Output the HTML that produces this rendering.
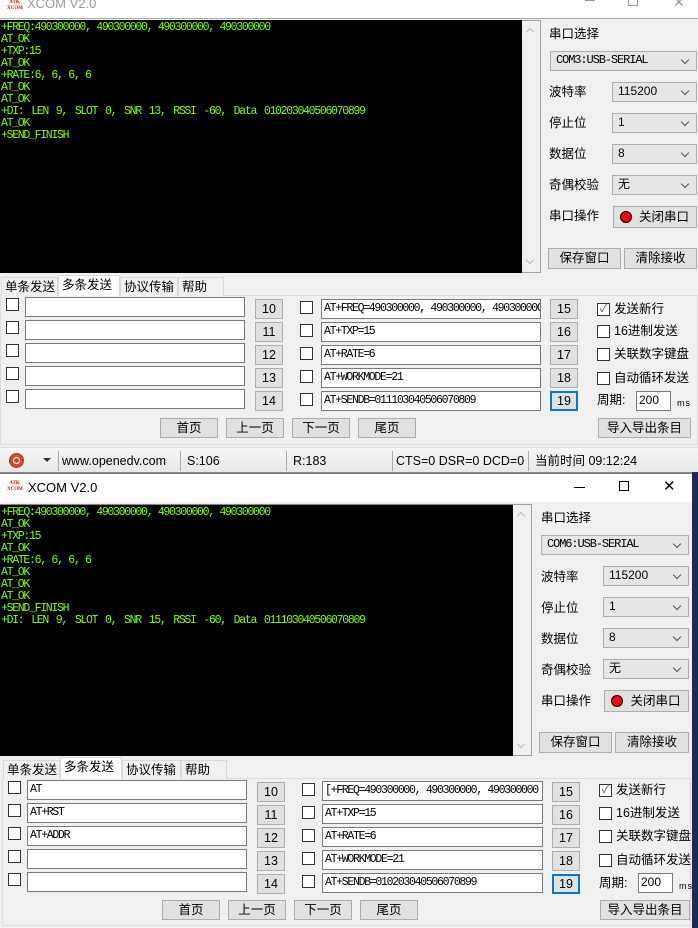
<!DOCTYPE html><html><head><meta charset="utf-8"><style>
*{box-sizing:border-box;margin:0;padding:0}
body{width:698px;height:928px;background:#f0f0f0;position:relative;overflow:hidden;font-family:"Liberation Sans","Noto Sans CJK SC",sans-serif;font-size:12px;color:#000}
.a{position:absolute}
.term{background:#000;color:#80ff00;font-family:"Liberation Mono","Noto Sans CJK SC",monospace;font-size:11.5px;letter-spacing:-1.3px;line-height:12px;padding:2px 0 0 1px;white-space:pre}
.term span{word-spacing:2.2px}
.sb{background:#f0f0f0;border:1px solid #a0a0a0;border-left:none}
.lbl{position:absolute;font-size:12.5px;line-height:14px}
.cb{position:absolute;background:#e6e6e6;border:1px solid #adadad;font-size:12px;padding-left:5px;line-height:17px}
.cb:after{content:"";position:absolute;right:8px;top:5px;width:5px;height:5px;border-right:1px solid #555;border-bottom:1px solid #555;transform:rotate(45deg)}
.cbm{font-family:"Liberation Mono",monospace;font-size:12px;letter-spacing:-1.1px}
.btn{position:absolute;background:#e1e1e1;border:1px solid #adadad;text-align:center;font-size:12.5px;line-height:18px}
.chk{position:absolute;width:13px;height:13px;border:1px solid #333;background:#fff}
.in{position:absolute;background:#fff;border:1px solid #7a7a7a;font-family:"Liberation Mono",monospace;font-size:11.5px;letter-spacing:-1.3px;line-height:17px;padding-left:2px;white-space:nowrap;overflow:hidden}
.tab{position:absolute;border:1px solid #d9d9d9;border-bottom:none;background:#f0f0f0;font-size:12.5px;line-height:18px;padding-left:3px}
.tab.s{background:#fff}
.panel{position:absolute;border:1px solid #dcdcdc;background:#f0f0f0}
.title{position:absolute;background:#fff;font-size:13px}
.logo{position:absolute;width:15px;height:13px;color:#e00;font-size:5px;font-weight:bold;line-height:6px;text-align:center;font-family:"Liberation Serif",serif}
.led{position:absolute;width:12px;height:12px;border-radius:50%;background:#f00;border:1px solid #000}
.st{position:absolute;font-size:12.5px;line-height:14px}
.sep{position:absolute;width:1px;background:#aaa}
</style></head><body>

<!-- TOP WINDOW -->
<div class="title" style="left:0;top:0;width:698px;height:19px;border-bottom:1px solid #aaa"></div>
<div class="logo" style="left:7px;top:0">ATK<br>XCOM</div>
<div class="a" style="left:27px;top:-4px;font-size:13px;color:#999">XCOM V2.0</div>
<div class="a" style="left:585px;top:0;width:10px;height:1px;background:#999"></div>
<div class="a" style="left:628px;top:-4px;width:10px;height:10px;border:1px solid #999"></div>
<div class="a" style="left:673px;top:-6px;font-size:14px;color:#999">✕</div>

<div class="a term" style="left:0;top:20px;width:522px;height:253px">+FREQ:490300000, 490300000, 490300000, 490300000
AT_OK
+TXP:15
AT_OK
+RATE:6, 6, 6, 6
AT_OK
AT_OK
<span>+DI: LEN 9, SLOT 0, SNR 13, RSSI -60, Data 010203040506070899</span>
AT_OK
+SEND_FINISH</div>
<div class="a sb" style="left:522px;top:20px;width:19px;height:253px"><div class="a" style="left:5px;top:8px;width:6px;height:6px;border-left:1px solid #bbb;border-top:1px solid #bbb;transform:rotate(45deg)"></div><div class="a" style="left:5px;top:236px;width:6px;height:6px;border-right:1px solid #bbb;border-bottom:1px solid #bbb;transform:rotate(45deg)"></div></div>

<div class="lbl" style="left:549px;top:27px">串口选择</div>
<div class="cb cbm" style="left:550px;top:51px;width:147px;height:20px">COM3:USB-SERIAL</div>
<div class="lbl" style="left:549px;top:85px">波特率</div><div class="cb" style="left:612px;top:82px;width:85px;height:20px">115200</div>
<div class="lbl" style="left:549px;top:116px">停止位</div><div class="cb" style="left:612px;top:113px;width:85px;height:20px">1</div>
<div class="lbl" style="left:549px;top:147px">数据位</div><div class="cb" style="left:612px;top:144px;width:85px;height:20px">8</div>
<div class="lbl" style="left:549px;top:178px">奇偶校验</div><div class="cb" style="left:612px;top:175px;width:85px;height:20px">无</div>
<div class="lbl" style="left:549px;top:209px">串口操作</div>
<div class="btn" style="left:613px;top:206px;width:84px;height:22px;padding-left:18px;line-height:20px">关闭串口</div><div class="led" style="left:620px;top:211px"></div>
<div class="btn" style="left:548px;top:248px;width:73px;height:21px">保存窗口</div>
<div class="btn" style="left:624px;top:248px;width:73px;height:21px">清除接收</div>

<div class="panel" style="left:0;top:295px;width:698px;height:150px"></div>
<div class="tab" style="left:1px;top:277px;width:57px;height:19px">单条发送</div>
<div class="tab s" style="left:58px;top:275px;width:62px;height:21px">多条发送</div>
<div class="tab" style="left:120px;top:277px;width:58px;height:19px">协议传输</div>
<div class="tab" style="left:178px;top:277px;width:46px;height:19px">帮助</div>

<div class="chk" style="left:6px;top:298px"></div><div class="in" style="left:25px;top:297px;width:220px;height:20px"></div><div class="btn" style="left:255px;top:299px;width:28px;height:20px">10</div>
<div class="chk" style="left:6px;top:321px"></div><div class="in" style="left:25px;top:320px;width:220px;height:20px"></div><div class="btn" style="left:255px;top:322px;width:28px;height:20px">11</div>
<div class="chk" style="left:6px;top:344px"></div><div class="in" style="left:25px;top:343px;width:220px;height:20px"></div><div class="btn" style="left:255px;top:345px;width:28px;height:20px">12</div>
<div class="chk" style="left:6px;top:367px"></div><div class="in" style="left:25px;top:366px;width:220px;height:20px"></div><div class="btn" style="left:255px;top:368px;width:28px;height:20px">13</div>
<div class="chk" style="left:6px;top:390px"></div><div class="in" style="left:25px;top:389px;width:220px;height:20px"></div><div class="btn" style="left:255px;top:391px;width:28px;height:20px">14</div>

<div class="chk" style="left:300px;top:301px"></div><div class="in" style="left:321px;top:299px;width:220px;height:20px">AT+FREQ=490300000, 490300000, 49030000C</div><div class="btn" style="left:550px;top:299px;width:28px;height:20px">15</div>
<div class="chk" style="left:300px;top:324px"></div><div class="in" style="left:321px;top:322px;width:220px;height:20px">AT+TXP=15</div><div class="btn" style="left:550px;top:322px;width:28px;height:20px">16</div>
<div class="chk" style="left:300px;top:347px"></div><div class="in" style="left:321px;top:345px;width:220px;height:20px">AT+RATE=6</div><div class="btn" style="left:550px;top:345px;width:28px;height:20px">17</div>
<div class="chk" style="left:300px;top:370px"></div><div class="in" style="left:321px;top:368px;width:220px;height:20px">AT+WORKMODE=21</div><div class="btn" style="left:550px;top:368px;width:28px;height:20px">18</div>
<div class="chk" style="left:300px;top:393px"></div><div class="in" style="left:321px;top:391px;width:220px;height:20px">AT+SENDB=011103040506070809</div><div class="btn" style="left:550px;top:391px;width:28px;height:20px;border:2px solid #0078d7;line-height:16px">19</div>

<div class="chk" style="left:597px;top:303px;font-size:11px;line-height:11px;color:#555;text-align:center">✓</div><div class="st" style="left:614px;top:302px">发送新行</div>
<div class="chk" style="left:597px;top:325px"></div><div class="st" style="left:614px;top:324px">16进制发送</div>
<div class="chk" style="left:597px;top:348px"></div><div class="st" style="left:614px;top:347px">关联数字键盘</div>
<div class="chk" style="left:597px;top:372px"></div><div class="st" style="left:614px;top:371px">自动循环发送</div>
<div class="st" style="left:597px;top:393px">周期:</div><div class="in" style="left:636px;top:391px;width:35px;height:20px;font-family:'Liberation Sans';font-size:12px;letter-spacing:0">200</div><div class="st" style="left:677px;top:396px;font-size:9px;letter-spacing:1px">ms</div>

<div class="btn" style="left:160px;top:418px;width:58px;height:20px">首页</div>
<div class="btn" style="left:226px;top:418px;width:58px;height:20px">上一页</div>
<div class="btn" style="left:292px;top:418px;width:58px;height:20px">下一页</div>
<div class="btn" style="left:358px;top:418px;width:58px;height:20px">尾页</div>
<div class="btn" style="left:598px;top:418px;width:93px;height:20px">导入导出条目</div>

<!-- status bar -->
<div class="a" style="left:0;top:447px;width:698px;height:26px;background:linear-gradient(#f6f6f6,#e8e8e8);border-top:1px solid #ddd;border-bottom:1px solid #888"></div>
<div class="a" style="left:9px;top:453px;width:15px;height:15px;border-radius:50%;background:#d84a2a;border:1px solid #a33"><div class="a" style="left:3px;top:3px;width:7px;height:7px;border-radius:50%;border:1.5px solid #fff"></div></div>
<div class="a" style="left:43px;top:458px;width:0;height:0;border-left:4px solid transparent;border-right:4px solid transparent;border-top:4px solid #333"></div>
<div class="sep" style="left:58px;top:451px;height:20px"></div>
<div class="st" style="left:62px;top:454px">www.openedv.com</div>
<div class="sep" style="left:180px;top:451px;height:20px"></div>
<div class="st" style="left:187px;top:454px">S:106</div>
<div class="sep" style="left:286px;top:451px;height:20px"></div>
<div class="st" style="left:293px;top:454px">R:183</div>
<div class="sep" style="left:392px;top:451px;height:20px"></div>
<div class="st" style="left:396px;top:454px">CTS=0 DSR=0 DCD=0</div>
<div class="sep" style="left:528px;top:451px;height:20px"></div>
<div class="st" style="left:535px;top:454px">当前时间 09:12:24</div>

<!-- BOTTOM WINDOW -->
<div class="a" style="left:692px;top:472px;width:6px;height:456px;background:#1c2a55"></div>
<div class="title" style="left:0;top:473px;width:692px;height:29px;border-top:1px solid #777"></div>
<div class="logo" style="left:7px;top:481px">ATK<br>XCOM</div>
<div class="a" style="left:28px;top:480px;font-size:13px">XCOM V2.0</div>
<div class="a" style="left:574px;top:487px;width:11px;height:1px;background:#000"></div>
<div class="a" style="left:619px;top:481px;width:10px;height:10px;border:1px solid #000"></div>
<div class="a" style="left:663px;top:477px;font-size:15px">✕</div>

<div class="a term" style="left:0;top:504px;width:513px;height:252px;border-top:1px solid #888">+FREQ:490300000, 490300000, 490300000, 490300000
AT_OK
+TXP:15
AT_OK
+RATE:6, 6, 6, 6
AT_OK
AT_OK
AT_OK
+SEND_FINISH
<span>+DI: LEN 9, SLOT 0, SNR 15, RSSI -60, Data 011103040506070809</span></div>
<div class="a sb" style="left:513px;top:504px;width:19px;height:252px"><div class="a" style="left:5px;top:8px;width:6px;height:6px;border-left:1px solid #bbb;border-top:1px solid #bbb;transform:rotate(45deg)"></div><div class="a" style="left:5px;top:236px;width:6px;height:6px;border-right:1px solid #bbb;border-bottom:1px solid #bbb;transform:rotate(45deg)"></div></div>

<div class="lbl" style="left:541px;top:511px">串口选择</div>
<div class="cb cbm" style="left:541px;top:535px;width:148px;height:20px">COM6:USB-SERIAL</div>
<div class="lbl" style="left:541px;top:570px">波特率</div><div class="cb" style="left:603px;top:566px;width:86px;height:20px">115200</div>
<div class="lbl" style="left:541px;top:601px">停止位</div><div class="cb" style="left:603px;top:597px;width:86px;height:20px">1</div>
<div class="lbl" style="left:541px;top:632px">数据位</div><div class="cb" style="left:603px;top:628px;width:86px;height:20px">8</div>
<div class="lbl" style="left:541px;top:663px">奇偶校验</div><div class="cb" style="left:603px;top:659px;width:86px;height:20px">无</div>
<div class="lbl" style="left:541px;top:694px">串口操作</div>
<div class="btn" style="left:604px;top:690px;width:85px;height:22px;padding-left:18px;line-height:20px">关闭串口</div><div class="led" style="left:611px;top:695px"></div>
<div class="btn" style="left:539px;top:732px;width:73px;height:21px">保存窗口</div>
<div class="btn" style="left:615px;top:732px;width:74px;height:21px">清除接收</div>

<div class="panel" style="left:2px;top:778px;width:689px;height:148px"></div>
<div class="tab" style="left:3px;top:760px;width:57px;height:19px">单条发送</div>
<div class="tab s" style="left:60px;top:757px;width:62px;height:22px">多条发送</div>
<div class="tab" style="left:122px;top:760px;width:59px;height:19px">协议传输</div>
<div class="tab" style="left:181px;top:760px;width:46px;height:19px">帮助</div>

<div class="chk" style="left:8px;top:781px"></div><div class="in" style="left:27px;top:780px;width:220px;height:20px">AT</div><div class="btn" style="left:257px;top:782px;width:28px;height:20px">10</div>
<div class="chk" style="left:8px;top:804px"></div><div class="in" style="left:27px;top:803px;width:220px;height:20px">AT+RST</div><div class="btn" style="left:257px;top:805px;width:28px;height:20px">11</div>
<div class="chk" style="left:8px;top:827px"></div><div class="in" style="left:27px;top:826px;width:220px;height:20px">AT+ADDR</div><div class="btn" style="left:257px;top:828px;width:28px;height:20px">12</div>
<div class="chk" style="left:8px;top:850px"></div><div class="in" style="left:27px;top:849px;width:220px;height:20px"></div><div class="btn" style="left:257px;top:851px;width:28px;height:20px">13</div>
<div class="chk" style="left:8px;top:873px"></div><div class="in" style="left:27px;top:872px;width:220px;height:20px"></div><div class="btn" style="left:257px;top:874px;width:28px;height:20px">14</div>

<div class="chk" style="left:302px;top:783px"></div><div class="in" style="left:322px;top:781px;width:221px;height:20px">[+FREQ=490300000, 490300000, 490300000</div><div class="btn" style="left:552px;top:782px;width:28px;height:20px">15</div>
<div class="chk" style="left:302px;top:806px"></div><div class="in" style="left:322px;top:804px;width:221px;height:20px">AT+TXP=15</div><div class="btn" style="left:552px;top:805px;width:28px;height:20px">16</div>
<div class="chk" style="left:302px;top:829px"></div><div class="in" style="left:322px;top:827px;width:221px;height:20px">AT+RATE=6</div><div class="btn" style="left:552px;top:828px;width:28px;height:20px">17</div>
<div class="chk" style="left:302px;top:852px"></div><div class="in" style="left:322px;top:850px;width:221px;height:20px">AT+WORKMODE=21</div><div class="btn" style="left:552px;top:851px;width:28px;height:20px">18</div>
<div class="chk" style="left:302px;top:875px"></div><div class="in" style="left:322px;top:873px;width:221px;height:20px">AT+SENDB=010203040506070899</div><div class="btn" style="left:552px;top:874px;width:28px;height:20px;border:2px solid #0078d7;line-height:16px">19</div>

<div class="chk" style="left:599px;top:784px;font-size:11px;line-height:11px;color:#555;text-align:center">✓</div><div class="st" style="left:616px;top:783px">发送新行</div>
<div class="chk" style="left:599px;top:807px"></div><div class="st" style="left:616px;top:806px">16进制发送</div>
<div class="chk" style="left:599px;top:830px"></div><div class="st" style="left:616px;top:829px">关联数字键盘</div>
<div class="chk" style="left:599px;top:854px"></div><div class="st" style="left:616px;top:853px">自动循环发送</div>
<div class="st" style="left:599px;top:876px">周期:</div><div class="in" style="left:638px;top:873px;width:35px;height:20px;font-family:'Liberation Sans';font-size:12px;letter-spacing:0">200</div><div class="st" style="left:679px;top:879px;font-size:9px;letter-spacing:1px">ms</div>

<div class="btn" style="left:162px;top:900px;width:58px;height:20px">首页</div>
<div class="btn" style="left:228px;top:900px;width:58px;height:20px">上一页</div>
<div class="btn" style="left:294px;top:900px;width:58px;height:20px">下一页</div>
<div class="btn" style="left:360px;top:900px;width:58px;height:20px">尾页</div>
<div class="btn" style="left:600px;top:900px;width:90px;height:20px">导入导出条目</div>
</body></html>
